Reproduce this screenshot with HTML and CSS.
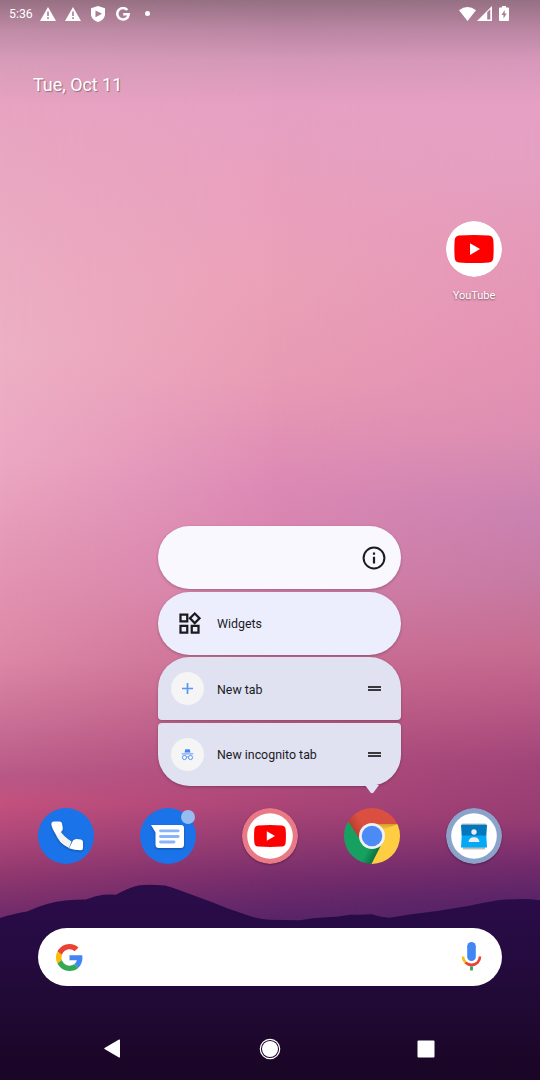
FILE: index.html
```html
<!DOCTYPE html>
<html lang="en">
<head>
<meta charset="utf-8">
<title>Home</title>
<link rel="stylesheet" href="styles.css">
</head>
<body>
<div class="screen">
  <div class="sky sky-mid"></div>
  <div class="sky sky-right"></div>
  <svg class="hills" viewBox="0 0 540 200" width="540" height="200">
    <defs><linearGradient id="hill" x1="0" y1="0" x2="0" y2="1"><stop offset="0" stop-color="#2b0c4a"/><stop offset=".3" stop-color="#260b42"/><stop offset=".7" stop-color="#1f0931"/><stop offset="1" stop-color="#190524"/></linearGradient></defs>
    <path fill="url(#hill)" d="M0 38Q12 34 27 31.500Q48 22 65 20.500Q76 19.500 86 19.500Q95 16 103 14.700Q110 14.500 116 14.700Q128 8 138 5.500Q148 4 165 5.500Q172 7 179 10L213 22.500Q228 29 241 33Q257 39 270 39.800Q287 40 300 40.300Q312 38 327 37.300Q338 37 350 34.700Q362 35 372 34.300Q382 37.500 389 37.700Q400 36 413 34Q440 31 468 26Q482 23 496 20.500Q524 17.500 540 20.300V200H0Z"/>
  </svg>

  <header class="status">
    <span class="clock">5:36</span>
    <svg class="st warn" width="16" height="14" viewBox="0 0 16 14"><path fill="#fff" d="M8 0 16 14H0z"/><path stroke="#a97d93" stroke-width="1.600" d="M8 4.500V9M8 10.300v1.700"/></svg>
    <svg class="st warn" width="16" height="14" viewBox="0 0 16 14"><path fill="#fff" d="M8 0 16 14H0z"/><path stroke="#a97d93" stroke-width="1.600" d="M8 4.500V9M8 10.300v1.700"/></svg>
    <svg class="st shield" width="14" height="16" viewBox="0 0 14 16"><path fill="#fff" d="M7 0 14 2.300V8C14 12 11 14.800 7 16 3 14.800 0 12 0 8V2.300z"/><path fill="#a97d93" d="M4.500 4.400v6.800L11 7.800z"/></svg>
    <svg class="st gee" width="14" height="14" viewBox="0 0 14 14"><path fill="none" stroke="#fff" stroke-width="2.500" d="M11.300 3A5.700 5.700 0 1 0 12.700 7.300H7.200"/></svg>
    <i class="dot"></i>
    <div class="signals">
      <svg width="17" height="14" viewBox="0 0 17 14"><path fill="#fff" d="M0 3.200Q8.500-3 17 3.200L8.500 14z"/></svg>
      <svg width="15" height="15" viewBox="0 0 15 15"><path fill="#fff" d="M0 15 15 0V15z"/><path fill="#aa7b94" d="M10.200 6.300 13.300 3.300V13.500H10.200z"/></svg>
      <svg class="battery" width="10" height="15" viewBox="0 0 10 15"><path fill="#fff" d="M3 0h4v1.500h2q1 0 1 1V14q0 1-1 1H1q-1 0-1-1V2.500q0-1 1-1h2z"/><path fill="#a97d93" d="M5.700 4 2.500 9h2v3.500l3.200-5h-2z"/></svg>
    </div>
  </header>

  <div class="date">Tue, Oct 11</div>

  <main class="workspace">
    <div class="app">
      <svg class="disc" width="56" height="56" viewBox="0 0 56 56"><circle cx="28" cy="28" r="28" fill="#fff"/><path fill="#f00" d="M13 14.500Q28 13.500 43 14.500Q47 15 47.300 19Q48 28 47.300 37Q47 41 43 41.500Q28 42.500 13 41.500Q9 41 8.700 37Q8 28 8.700 19Q9 15 13 14.500Z"/><path fill="#fff" d="M24 22.200v11.800L34 28z"/></svg>
      <span class="label">YouTube</span>
    </div>
  </main>

  <nav class="dock">
    <svg width="56" height="56" viewBox="0 0 56 56"><circle cx="28" cy="28" r="28" fill="#1a73e8"/><g class="lift"><path fill="#f1f3f4" d="M17 24 22 22.500Q25 28 33.500 33.500L31 40Q20 35 17 24Z"/><path fill="#fff" d="M15.500 13.500H21.500Q23.600 13.500 24 15.500L24.800 20Q25 22 23.500 23.500L18.500 27.500Q13.500 20 13.300 16Q13.300 13.600 15.500 13.500ZM31 40.300 35 32.500Q36.500 31 38.500 31L43 31.500Q45 32 45 34V40Q45 42.300 43 42.300Q37 42.500 31 40.300Z"/></g></svg>
    <div class="badged">
      <svg width="56" height="56" viewBox="0 0 56 56"><circle cx="28" cy="28" r="28" fill="#1a73e8"/><path class="lift" fill="#fff" d="M11 17H41Q44 17 44 20V36.500Q44 40 40.500 40H19Q15.500 40 15.500 36.500V24.500Z"/><path stroke="#8ab4f8" stroke-width="2.800" stroke-linecap="round" d="M20.500 22.800H38.200M20.500 28.500H38.200M20.500 34H34"/></svg>
      <i class="badge"></i>
    </div>
    <svg class="disc" width="56" height="56" viewBox="0 0 56 56"><circle cx="28" cy="28" r="28" fill="#e87985"/><circle cx="28" cy="28" r="22.800" fill="#fff"/><path fill="#f00" d="M16 17.500Q28 16.500 40 17.500Q43.300 18 43.600 21Q44.300 28 43.600 35Q43.300 38.200 40 38.600Q28 39.500 16 38.600Q12.700 38.200 12.400 35Q11.700 28 12.400 21Q12.700 18 16 17.500Z"/><path fill="#fff" d="M24.800 23.300v9.400L33 28z"/></svg>
    <svg width="56" height="56" viewBox="0 0 56 56">
      <defs>
        <clipPath id="round"><circle cx="28" cy="28" r="28"/></clipPath>
        <linearGradient id="shadeY" x1="0" y1="0" x2="0" y2="1"><stop offset="0" stop-color="#ce9e2e"/><stop offset="1" stop-color="#ffcd40"/></linearGradient>
        <linearGradient id="shadeR" gradientUnits="userSpaceOnUse" x1="8" y1="23" x2="19" y2="17"><stop offset="0" stop-color="#b23d2c"/><stop offset="1" stop-color="#db4f41"/></linearGradient>
        <linearGradient id="shadeG" gradientUnits="userSpaceOnUse" x1="33" y1="46" x2="24" y2="41"><stop offset="0" stop-color="#0b7040"/><stop offset="1" stop-color="#17a160"/></linearGradient>
      </defs>
      <g clip-path="url(#round)"><path fill="#ffcd41" d="M28 16H60V60H26Z"/><path fill="url(#shadeY)" d="M28 16H54L38 22Z"/><path fill="url(#shadeR)" d="M0 0H56V16H28L17 34 4 14Z"/><path fill="url(#shadeG)" d="M4 13 17.600 34.500 28 40 38.600 34 26.500 58H-4V13Z"/></g>
      <circle cx="28" cy="28" r="13" fill="#f1f1f1"/><circle cx="28" cy="28" r="10.300" fill="#4c8bf5"/>
    </svg>
    <svg class="disc" width="56" height="56" viewBox="0 0 56 56"><circle cx="28" cy="28" r="28" fill="#8ba3cb"/><circle cx="28" cy="28" r="22.800" fill="#fff"/><path fill="#bdbdbd" d="M16 15.500H40L39 41.500H17z"/><path fill="#0277bd" d="M15 16.800H41L40.300 28H15.700z"/><path fill="#03a9f4" d="M15.700 27.500H40.300L41 39.500H15z"/><circle cx="28" cy="24" r="2.700" fill="#eee"/><path fill="#eee" d="M22.500 34Q23 29.200 28 29.200T33.500 34z"/></svg>
  </nav>

  <div class="search">
    <svg width="27" height="27" viewBox="0 0 48 48"><path fill="#ea4335" d="M24 9.500c3.540 0 6.710 1.220 9.210 3.600l6.850-6.850C35.900 2.380 30.470 0 24 0 14.620 0 6.510 5.380 2.560 13.220l7.980 6.190C12.430 13.720 17.740 9.500 24 9.500z"/><path fill="#4285f4" d="M46.980 24.550c0-1.570-.15-3.090-.38-4.550H24v9.020h12.940c-.58 2.960-2.260 5.480-4.780 7.180l7.730 6c4.510-4.180 7.090-10.360 7.090-17.650z"/><path fill="#fbbc05" d="M10.530 28.590a14.500 14.500 0 0 1 0-9.180l-7.980-6.190a24 24 0 0 0 0 21.560z"/><path fill="#34a853" d="M24 48c6.480 0 11.930-2.130 15.890-5.810l-7.730-6c-2.150 1.450-4.920 2.300-8.160 2.300-6.260 0-11.570-4.220-13.470-9.910l-7.980 6.190C6.510 42.620 14.620 48 24 48z"/></svg>
    <svg width="21" height="30" viewBox="0 0 21 30"><rect x="6.200" y="0" width="8.600" height="19" rx="4.300" fill="#4285f4"/><path fill="none" stroke="#fbbc05" stroke-width="2.600" d="M2 14.500Q2 18.100 4.500 20.500"/><path fill="none" stroke="#ea4335" stroke-width="2.600" d="M4.500 20.500Q7 22.900 10.500 22.900C15.500 22.900 19 19.300 19 14.500"/><path stroke="#34a853" stroke-width="2.800" d="M10.500 24.200V28.500"/></svg>
  </div>

  <footer class="nav">
    <svg width="16" height="19" viewBox="0 0 16 19"><path fill="#fff" d="M15 .5Q16 .2 16 1V18Q16 18.800 15 18.500L.5 10Q0 9.500.5 9z"/></svg>
    <svg class="home" width="22" height="22" viewBox="0 0 22 22"><circle cx="11" cy="11" r="9.700" fill="none" stroke="#fff" stroke-width="1.200"/><circle cx="11" cy="11" r="8" fill="#fff"/></svg>
    <svg width="18" height="18" viewBox="0 0 18 18"><rect x=".5" y=".5" width="17" height="17" rx="1" fill="#fff"/></svg>
  </footer>

  <div class="menu">
    <div class="row row-info"><svg width="24" height="24" viewBox="0 0 24 24"><circle cx="12" cy="12" r="10.400" fill="none" stroke="#1b1b1f" stroke-width="2"/><path stroke="#1b1b1f" stroke-width="2.200" d="M12 10.800V17.500M12 6.500V8.800"/></svg></div>
    <div class="row row-widgets">
      <svg class="lead" width="27" height="27" viewBox="0 0 24 24"><path fill="#1b1b1f" d="M16.660 4.520l2.830 2.830-2.830 2.830-2.830-2.830 2.830-2.830M9 5v4H5V5h4m10 10v4h-4v-4h4M9 15v4H5v-4h4m7.660-13.310L11 7.340 16.660 13l5.660-5.660-5.660-5.650zM11 3H3v8h8V3zm10 10h-8v8h8v-8zm-10 0H3v8h8v-8z"/></svg>
      <span>Widgets</span>
    </div>
    <div class="row row-tab">
      <svg class="lead" width="33" height="33" viewBox="0 0 33 33"><circle cx="16.500" cy="16.500" r="16.500" fill="#f5f5f5"/><path stroke="#5a95f5" stroke-width="1.700" d="M16.500 11V22M11 16.500H22"/></svg>
      <span>New tab</span>
      <i class="grip"></i>
    </div>
    <div class="row row-incognito">
      <svg class="lead" width="33" height="33" viewBox="0 0 33 33"><circle cx="16.500" cy="16.500" r="16.500" fill="#f5f5f5"/><path fill="#4285f4" d="M13.500 14.500 14.500 11 16.500 11.500 18.500 11 19.500 14.500z"/><path fill="none" stroke="#5a95f5" stroke-width="1" d="M10.700 15.900H22.300M15.700 19.200Q16.500 18.500 17.300 19.200"/><g fill="none" stroke="#5a95f5"><circle cx="13.500" cy="19.500" r="2.100"/><circle cx="19.500" cy="19.500" r="2.100"/></g></svg>
      <span>New incognito tab</span>
      <i class="grip"></i>
    </div>
    <svg class="pointer" width="14" height="9" viewBox="0 0 14 9"><path fill="#e0e1f1" d="M0 0H14L8.500 7.500Q7 9 5.500 7.500z"/></svg>
  </div>
</div>
</body>
</html>
```
FILE: styles.css
```css
* { box-sizing: border-box; }
body { margin: 0; font-family: Roboto, "Noto Sans", sans-serif; }
svg { display: block; flex: none; }

.screen {
  position: relative;
  display: flex;
  flex-direction: column;
  width: 540px;
  height: 1080px;
  overflow: hidden;
  background: linear-gradient(#977083 0, #c08ca6 30px, #d79cb8 60px, #e7a4c1 105px, #eaa9c1 200px, #edb0c4 350px, #eca8c2 460px, #e497b4 560px, #dd88a5 660px, #c96f95 725px, #b85987 775px, #c4517e 803px, #b0487a 835px, #91386f 875px, #6f2b6a 918px);
}
.sky { position: absolute; inset: 0; }
.sky-mid {
  background: linear-gradient(#957082 0, #bb86a3 30px, #d598b8 60px, #e6a0c3 105px, #e9a0bd 190px, #eba1b8 280px, #e89bb4 380px, #dc89b5 490px, #d47fa9 590px, #c4668c 690px, #b35180 750px, #ac4678 805px, #8c3870 850px, #762c6c 880px, #5a2568 918px);
  mask-image: linear-gradient(90deg, transparent, #000 50%);
}
.sky-right {
  background: linear-gradient(#957083 0, #bb86a3 30px, #d698ba 60px, #e5a0c4 105px, #e4a0c2 160px, #e598b8 250px, #e493b3 350px, #dd8eb1 430px, #ca82b0 510px, #c67aa3 580px, #c66c90 650px, #b95a86 700px, #a04478 765px, #963c72 820px, #722b6c 865px, #552366 905px);
  mask-image: linear-gradient(90deg, transparent 50%, #000);
}
.hills { position: absolute; left: 0; bottom: 0; }

.status { position: relative; display: flex; align-items: center; height: 27px; padding: 0 31px 0 9px; color: #fff; }
.clock { width: 31px; font-size: 12.3px; line-height: 28px; }
.warn { margin-right: 9px; }
.shield { margin: 0 11px 0 1px; }
.gee { margin-right: 15px; }
.dot { width: 5px; height: 5px; border-radius: 50%; background: #fff; }
.signals { display: flex; align-items: center; gap: 1px; margin-left: auto; }
.battery { margin-left: 6px; }

.date { position: relative; margin: 47px 0 0 33px; height: 22px; font-size: 17.9px; line-height: 22px; color: #fff; text-shadow: 1px 1px 1px rgba(0, 0, 0, .35); }

.workspace { position: relative; display: flex; justify-content: flex-end; padding: 125px 38px 0 0; height: 712px; }
.app { display: flex; flex-direction: column; align-items: center; width: 56px; }
.label { margin-top: 10.5px; font-size: 11px; line-height: 16px; color: #fff; text-shadow: 0 1px 2px rgba(0, 0, 0, .5); }
.disc { border-radius: 50%; }

.dock { position: relative; display: flex; justify-content: space-between; padding: 0 38px; height: 56px; }
.dock .disc { box-shadow: 0 1px 2px rgba(0, 0, 0, .3); }
.lift { filter: drop-shadow(0 1.5px 1px rgba(0, 0, 0, .3)); }
.badged { position: relative; }
.badge { position: absolute; top: 2px; left: 41px; width: 14px; height: 14px; border-radius: 50%; background: #95bdf2; }

.search { position: relative; display: flex; align-items: center; justify-content: space-between; margin: 64.4px 38px 0; height: 58px; padding: 0 20.5px 0 18px; border-radius: 29px; background: #fff; }
.nav { position: relative; display: flex; align-items: center; justify-content: space-between; margin-top: 51.5px; padding: 0 105px 0 104px; height: 22px; }
.home { margin-left: 2px; }

.menu { position: absolute; left: 158.4px; top: 526.4px; display: flex; flex-direction: column; gap: 2.5px; width: 243px; }
.row { display: flex; align-items: center; height: 63px; padding: 0 20px 0 13px; border-radius: 31.5px; font-size: 12.4px; color: #1b1b1f; box-shadow: 0 1px 3px rgba(0, 0, 0, .25); }
.row-info { justify-content: flex-end; padding-right: 15px; background: #f9f8ff; }
.row-widgets { background: #eceefe; padding-left: 18px; }
.row-widgets .lead { margin-right: 13.6px; }
.row-tab, .row-incognito { background: #e0e1f1; }
.row-tab { border-radius: 31.5px 31.5px 4px 4px; }
.row-incognito { border-radius: 4px 4px 31.5px 31.5px; }
.row span { position: relative; top: .5px; }
.lead { margin-right: 12.6px; }
.grip { width: 13px; height: 5px; margin-left: auto; border: solid #38383e; border-width: 2px 0; }
.pointer { position: absolute; left: 206.5px; top: 259px; }
```
